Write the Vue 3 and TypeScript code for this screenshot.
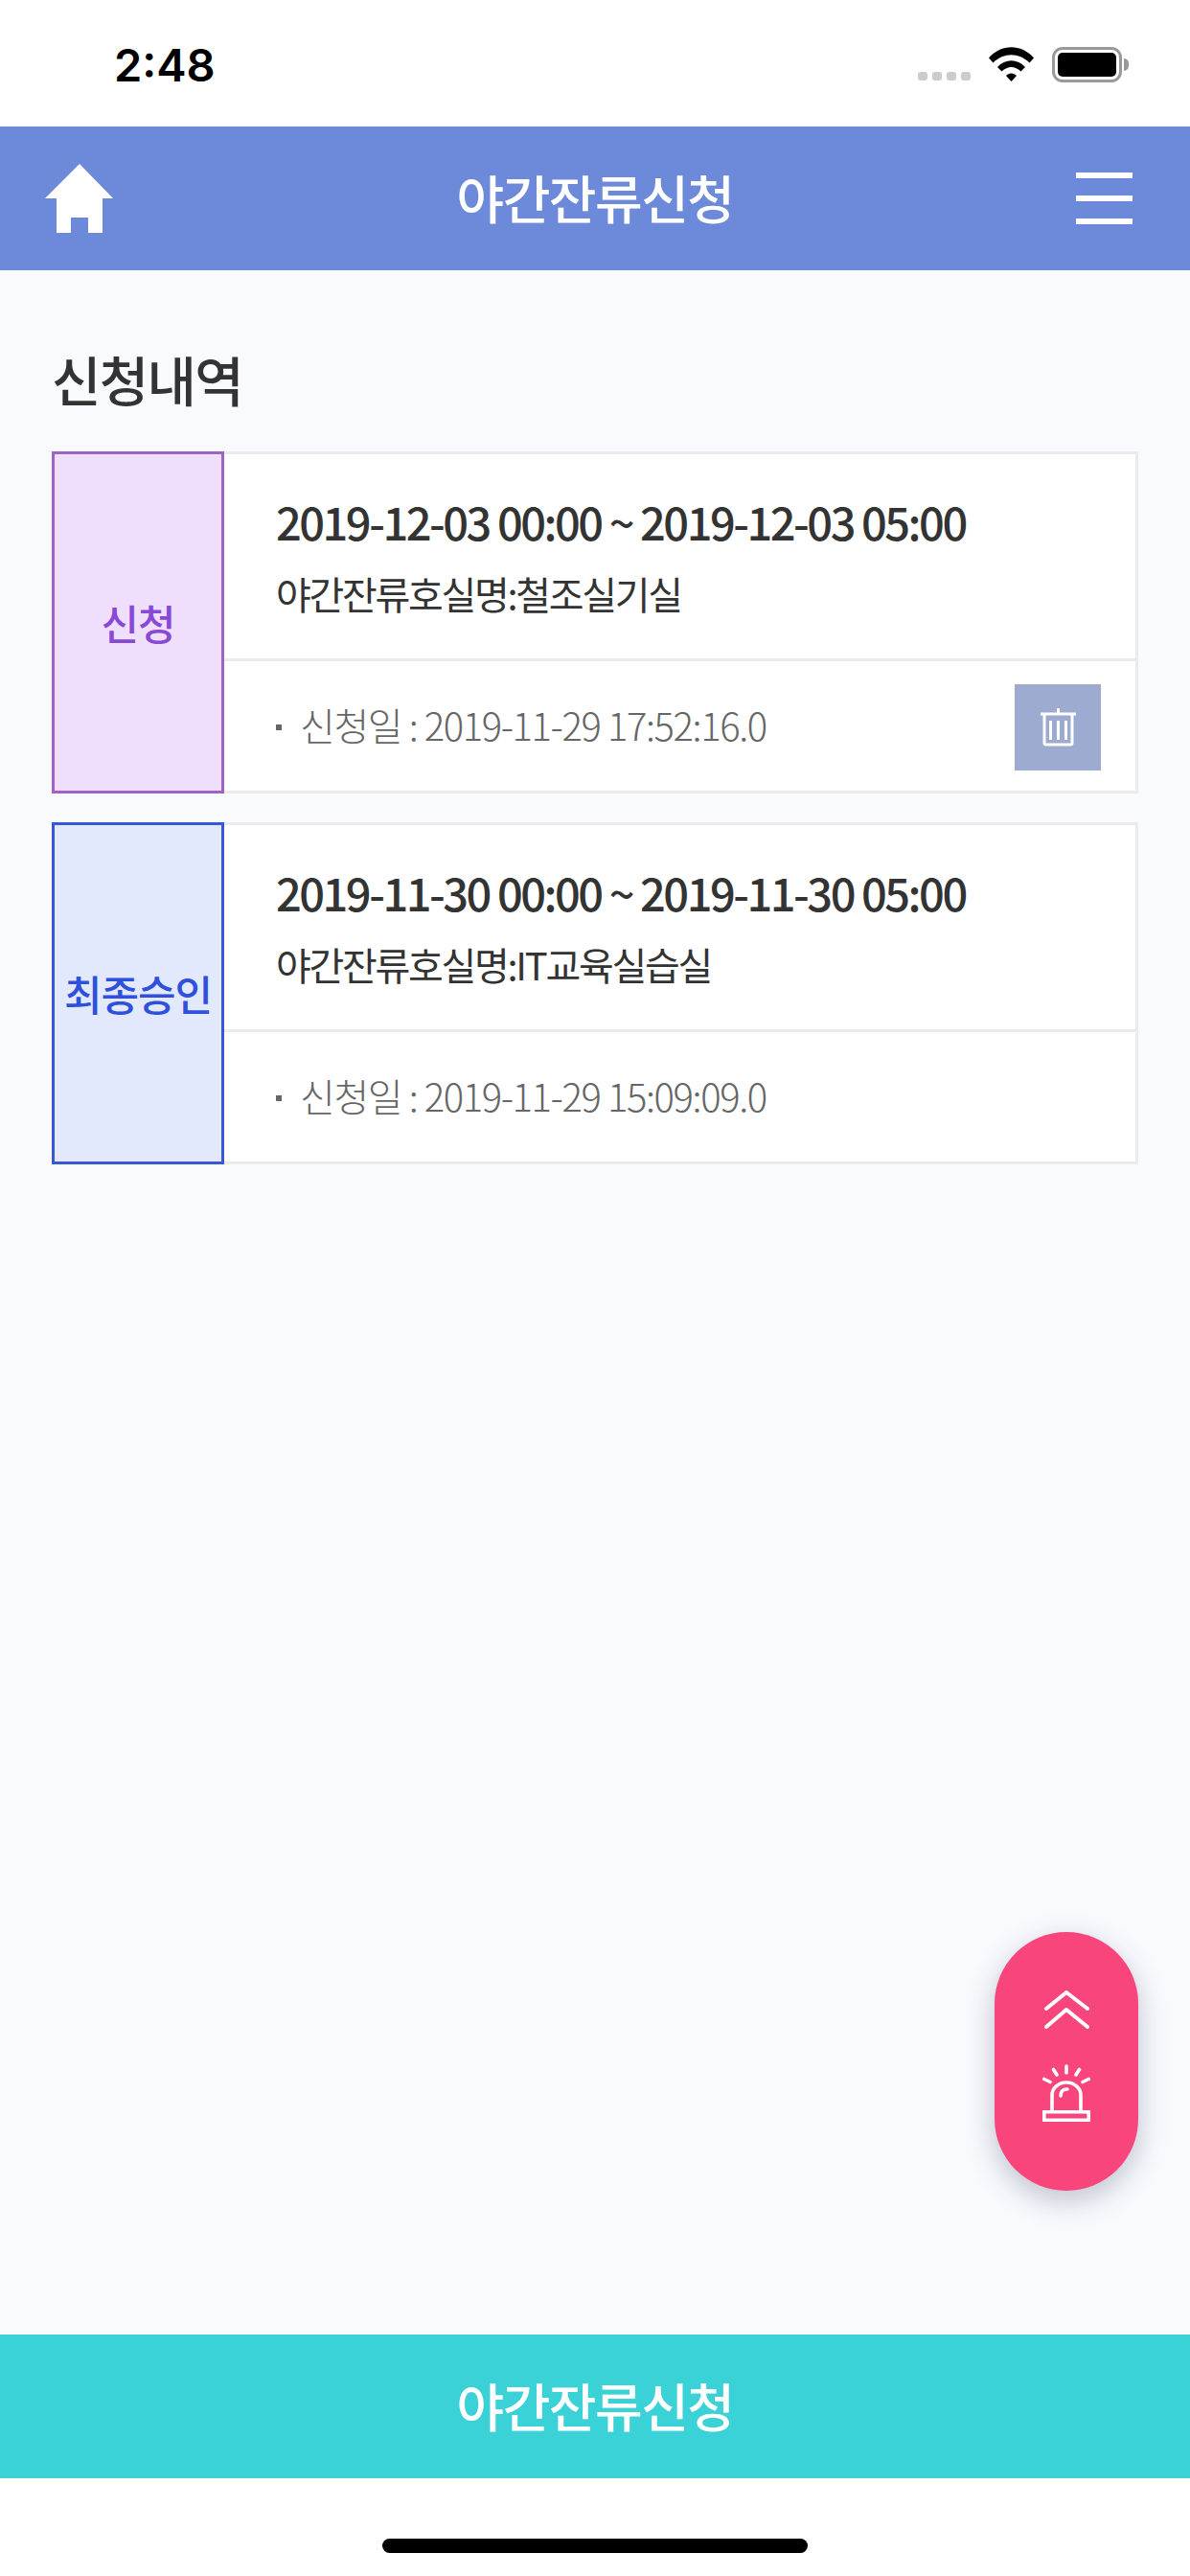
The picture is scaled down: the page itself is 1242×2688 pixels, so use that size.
<script setup lang="ts">
interface Request {
  status: string;
  tone: string;
  period: string;
  room: string;
  applied: string;
  deletable: boolean;
}

const requests: Request[] = [
  {
    status: "신청",
    tone: "pending",
    period: "2019-12-03 00:00 ~ 2019-12-03 05:00",
    room: "야간잔류호실명:철조실기실",
    applied: "신청일 : 2019-11-29 17:52:16.0",
    deletable: true,
  },
  {
    status: "최종승인",
    tone: "approved",
    period: "2019-11-30 00:00 ~ 2019-11-30 05:00",
    room: "야간잔류호실명:IT교육실습실",
    applied: "신청일 : 2019-11-29 15:09:09.0",
    deletable: false,
  },
];
</script>

<template>
  <div class="screen">
    <div class="status-bar">
      <span class="clock">2:48</span>
      <div class="status-icons">
        <div class="signal"><i /><i /><i /><i /></div>
        <svg class="wifi" width="47" height="36" viewBox="0 0 47 36">
          <path d="M0 11.5C13-3.5 34-3.5 47 11.5L42.5 16.5C31.5 5.5 15.5 5.5 4.5 16.5Z" />
          <path d="M9 21C17 12 30 12 38 21L33.5 25.5C27 19.5 20 19.5 13.5 25.5Z" />
          <path d="M18 30C21 26.5 26 26.5 29 30L23.5 36Z" />
        </svg>
        <div class="battery"><div class="battery-level" /></div>
      </div>
    </div>

    <header class="top-bar">
      <svg class="home" width="72" height="72" viewBox="0 0 72 72">
        <path d="M36 0L71 36H60V72H45V56H27V72H12V36H0Z" />
      </svg>
      <h1 class="top-title">야간잔류신청</h1>
      <div class="menu"><i /><i /><i /></div>
    </header>

    <main class="content">
      <h2 class="section-title">신청내역</h2>
      <div class="list">
        <article v-for="item in requests" :key="item.period" class="card">
          <div class="badge" :class="item.tone">{{ item.status }}</div>
          <div class="card-body">
            <div class="card-info">
              <p class="period">{{ item.period }}</p>
              <p class="room">{{ item.room }}</p>
            </div>
            <div class="card-foot">
              <span class="dot" />
              <span class="applied">{{ item.applied }}</span>
              <button v-if="item.deletable" class="delete" type="button">
                <svg width="37" height="40" viewBox="0 0 37 40" fill="none" stroke="#fff" stroke-width="3">
                  <path d="M0 6H37M18.5 0V6M4 6V36Q4 38 6 38H31Q33 38 33 36V6M10.5 13V33M18.5 13V33M26.5 13V33" />
                </svg>
              </button>
            </div>
          </div>
        </article>
      </div>
    </main>

    <button class="apply" type="button">야간잔류신청</button>
    <div class="home-area"><div class="home-indicator" /></div>

    <div class="fab">
      <svg width="47" height="40" viewBox="0 0 47 40" fill="none" stroke="#fff" stroke-width="4" stroke-linecap="round" stroke-linejoin="round">
        <path d="M2 19L23 2L45 19M2 38L23 20L45 38" />
      </svg>
      <svg width="50" height="60" viewBox="0 0 50 60" fill="none" stroke="#fff" stroke-width="3.6">
        <path d="M10 50V32A15 13 0 0 1 40 32V50M1.8 49.8H48.2V58.2H1.8Z" />
        <path stroke-linecap="round" d="M19 33C19 28 22 26 26 26M25 2V9M11.5 5.5L15 11M38.5 5.5L35 11M1.8 15.5L8 18.5M48.2 15.5L42 18.5" />
      </svg>
    </div>
  </div>
</template>

<style>
html,
body {
  margin: 0;
  background: #fff;
}
</style>

<style scoped>
.screen {
  position: relative;
  display: flex;
  flex-direction: column;
  width: 1242px;
  height: 2688px;
  overflow: hidden;
  background: #fff;
  font-family: "Noto Sans CJK KR", "Noto Sans", sans-serif;
}

.status-bar {
  display: flex;
  justify-content: space-between;
  align-items: flex-start;
  height: 132px;
  box-sizing: border-box;
  padding: 0 71px 0 119px;
}

.clock {
  margin-top: 40px;
  font-family: Inter, "Liberation Sans", sans-serif;
  font-size: 47px;
  font-weight: 600;
  line-height: 56px;
  color: #000;
}

.status-icons {
  display: flex;
  align-items: flex-start;
  margin-top: 49px;
}

.signal {
  display: flex;
  gap: 5px;
  margin: 26px 19px 0 0;
}

.signal i {
  width: 10px;
  height: 9px;
  border-radius: 3px;
  background: #ccc;
}

.wifi {
  margin-right: 19px;
}

.battery {
  position: relative;
  width: 73px;
  height: 37px;
  box-sizing: border-box;
  padding: 3px;
  border: 3px solid #999;
  border-radius: 11px;
}

.battery::after {
  content: "";
  position: absolute;
  top: 9px;
  right: -10px;
  width: 5px;
  height: 13px;
  border-radius: 0 5px 5px 0;
  background: #999;
}

.battery-level {
  height: 100%;
  border-radius: 5px;
  background: #000;
}

.top-bar {
  display: flex;
  justify-content: space-between;
  align-items: center;
  height: 150px;
  box-sizing: border-box;
  padding: 0 60px 0 47px;
  background: #6c89da;
}

.home {
  fill: #fff;
}

.top-title {
  margin: 0 0 3px;
  font-size: 54px;
  font-weight: 500;
  line-height: 1;
  letter-spacing: -1.5px;
  color: #fff;
}

.menu {
  display: flex;
  flex-direction: column;
  gap: 18px;
  width: 59px;
}

.menu i {
  height: 6px;
  background: #fff;
}

.content {
  flex: 1;
  padding: 0 54px;
  background: #f9fafe;
}

.section-title {
  margin: 75px 0 0;
  font-size: 56px;
  font-weight: 500;
  line-height: 76px;
  letter-spacing: -1.8px;
  color: #333;
}

.list {
  display: flex;
  flex-direction: column;
  gap: 30px;
  margin-top: 38px;
}

.card {
  display: flex;
  height: 357px;
}

.badge {
  display: flex;
  justify-content: center;
  align-items: center;
  flex: none;
  width: 180px;
  box-sizing: border-box;
  padding-bottom: 2px;
  border: 3px solid;
  font-size: 43px;
  font-weight: 500;
  letter-spacing: -1px;
}

.badge.pending {
  border-color: #9f62c6;
  background: #efdffd;
  color: #8749d6;
}

.badge.approved {
  border-color: #3758d4;
  background: #e3e9fd;
  color: #2f50dc;
}

.card-body {
  display: flex;
  flex-direction: column;
  flex: 1;
  box-sizing: border-box;
  border: 3px solid #ebebeb;
  border-left: 0;
  background: #fff;
}

.card-info {
  height: 216px;
  box-sizing: border-box;
  padding: 36px 0 0 54px;
  border-bottom: 3px solid #ebebeb;
}

.period {
  margin: 0;
  font-size: 47px;
  font-weight: 500;
  line-height: 68px;
  letter-spacing: -2.5px;
  color: #333;
}

.room {
  margin: 12px 0 0;
  font-size: 40px;
  line-height: 58px;
  letter-spacing: -2.3px;
  color: #333;
}

.card-foot {
  display: flex;
  align-items: center;
  flex: 1;
  padding: 3px 36px 0 54px;
}

.dot {
  flex: none;
  width: 6px;
  height: 6px;
  margin-right: 19px;
  background: #666;
}

.applied {
  flex: 1;
  margin-bottom: 6px;
  font-size: 40px;
  font-weight: 300;
  letter-spacing: -1.4px;
  color: #666;
}

.delete {
  display: flex;
  justify-content: center;
  align-items: center;
  width: 90px;
  height: 90px;
  padding: 0;
  border: 0;
  background: #9dabd0;
}

.apply {
  flex: none;
  height: 150px;
  padding: 0 0 3px;
  border: 0;
  background: #3ad2d6;
  font-family: inherit;
  font-size: 54px;
  font-weight: 500;
  letter-spacing: -1.5px;
  color: #fff;
}

.home-area {
  display: flex;
  justify-content: center;
  flex: none;
  height: 102px;
  box-sizing: border-box;
  padding-top: 63px;
}

.home-indicator {
  width: 444px;
  height: 15px;
  border-radius: 8px;
  background: #000;
}

.fab {
  position: absolute;
  top: 2016px;
  left: 1038px;
  display: flex;
  flex-direction: column;
  align-items: center;
  gap: 37px;
  width: 150px;
  height: 270px;
  box-sizing: border-box;
  padding-top: 61px;
  border-radius: 75px;
  background: #f8457c;
  box-shadow: 0 10px 30px rgba(40, 50, 80, 0.28);
}
</style>
